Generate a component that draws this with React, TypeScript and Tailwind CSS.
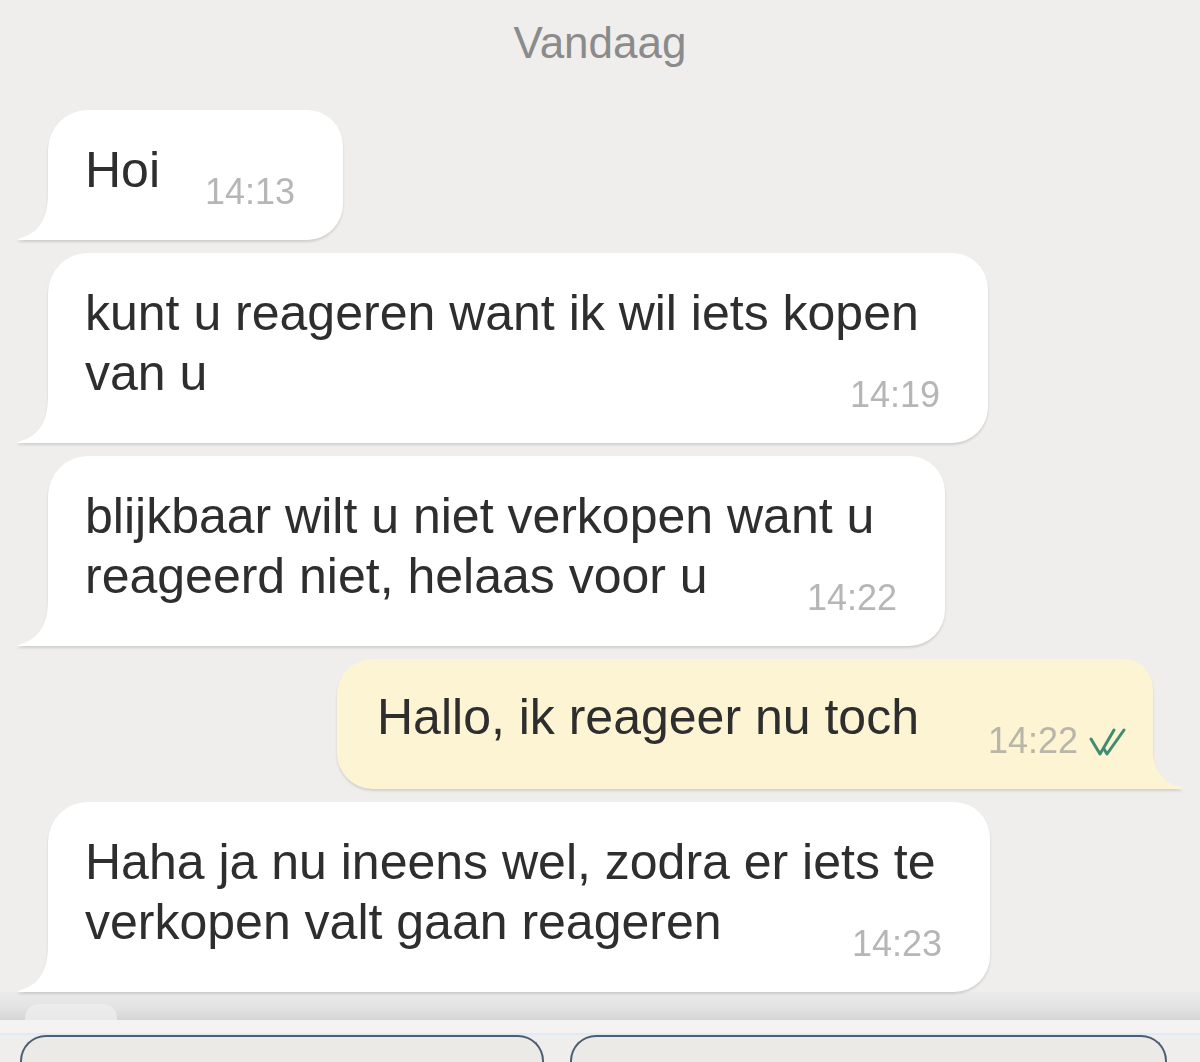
import React from "react";

const font = "font-['Liberation_Sans','Arial',sans-serif]";

function Checks() {
  return (
    <svg width="44" height="30" viewBox="0 0 44 30" fill="none" className="ml-[10px] mt-[2px]">
      <path d="M3 12 L12 27 L26 3" stroke="#3f8d70" strokeWidth="3" strokeLinecap="round" strokeLinejoin="round" />
      <path d="M16 22 L19 27 L36 3" stroke="#3f8d70" strokeWidth="3" strokeLinecap="round" strokeLinejoin="round" />
    </svg>
  );
}

function Received({ lines, time, width }: { lines: string[]; time: string; width: string }) {
  return (
    <div className={`relative ml-[48px] ${width} drop-shadow-[0_2px_1px_rgba(0,0,0,0.13)]`}>
      <svg width="34" height="48" viewBox="0 0 34 48" className="absolute left-[-30px] bottom-0">
        <path d="M30 0 C30 26 22 41 0 47 L0 48 L34 48 L34 0 Z" fill="#ffffff" />
      </svg>
      <div className="relative bg-white rounded-tl-[40px] rounded-tr-[36px] rounded-br-[36px] rounded-bl-none pt-[30px] pb-[30px] pl-[37px] pr-[48px] flex flex-col">
        <div className="text-[50px] leading-[60px] text-[#2e2e2e]">
          {lines.map((l) => (
            <div key={l} className="whitespace-nowrap">{l}</div>
          ))}
        </div>
        <div className="flex justify-end mt-[-26px] text-[36px] leading-[36px] text-[#b6b6b6]">{time}</div>
      </div>
    </div>
  );
}

function Sent({ text, time }: { text: string; time: string }) {
  return (
    <div className="relative self-start ml-[337px] w-[816px] drop-shadow-[0_2px_1px_rgba(0,0,0,0.12)]">
      <svg width="34" height="48" viewBox="0 0 34 48" className="absolute right-[-29px] bottom-0">
        <path d="M4 0 C4 26 12 41 34 47 L34 48 L0 48 L0 0 Z" fill="#fcf4d3" />
      </svg>
      <div className="relative bg-[#fcf4d3] rounded-tl-[36px] rounded-bl-[36px] rounded-tr-[30px] rounded-br-none pt-[28px] pb-[30px] pl-[40px] pr-[21px] flex flex-col">
        <div className="text-[50px] leading-[60px] text-[#2e2e2e] whitespace-nowrap">{text}</div>
        <div className="flex justify-end items-center mt-[-24px] h-[36px] text-[36px] leading-[36px] text-[#b8b5a9]">
          <span>{time}</span>
          <Checks />
        </div>
      </div>
    </div>
  );
}

export default function App() {
  return (
    <div className={`w-[1200px] h-[1062px] overflow-hidden bg-[#efeeec] flex flex-col ${font}`}>
      <div className="h-[86px] shrink-0 flex items-center justify-center text-[44px] text-[#8b8b8b]">Vandaag</div>
      <div className="flex flex-col gap-[13px] pt-[24px] shrink-0">
        <Received lines={["Hoi"]} time="14:13" width="w-[295px]" />
        <Received lines={["kunt u reageren want ik wil iets kopen", "van u"]} time="14:19" width="w-[940px]" />
        <Received lines={["blijkbaar wilt u niet verkopen want u", "reageerd niet, helaas voor u"]} time="14:22" width="w-[897px]" />
        <Sent text="Hallo, ik reageer nu toch" time="14:22" />
        <Received lines={["Haha ja nu ineens wel, zodra er iets te", "verkopen valt gaan reageren"]} time="14:23" width="w-[942px]" />
      </div>
      <div className="h-[28px] shrink-0 bg-gradient-to-b from-[#ebebeb] via-[#e4e4e4] to-[#d5d5d5] flex items-end">
        <div className="ml-[25px] w-[92px] h-[16px] rounded-t-[14px] bg-[#ededed] opacity-80" />
      </div>
      <div className="h-[15px] shrink-0 bg-[#f4f3f1] border-b-2 border-[#deeaf5]" />
      <div className="flex gap-[26px] pl-[20px] pr-[33px] shrink-0">
        <div className="w-[524px] h-[40px] rounded-t-[26px] border-2 border-b-0 border-[#4b5f74] bg-[#eceae7]" />
        <div className="flex-1 h-[40px] rounded-t-[26px] border-2 border-b-0 border-[#4b5f74] bg-[#eceae7]" />
      </div>
    </div>
  );
}
